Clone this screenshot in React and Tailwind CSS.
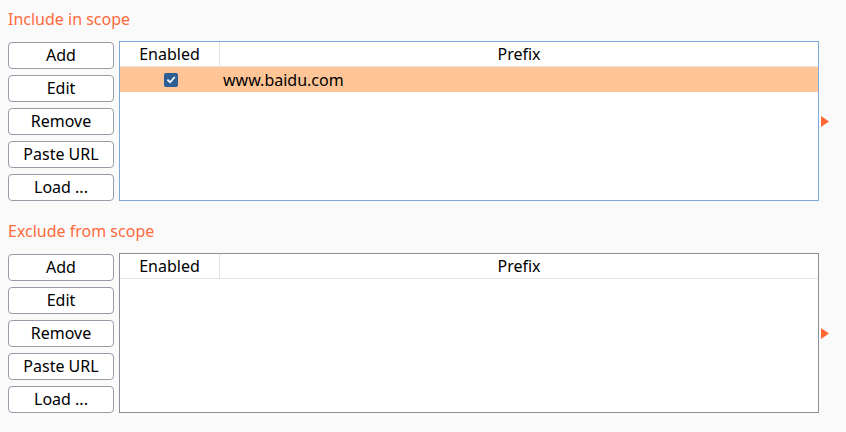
import React from "react";

const font = { fontFamily: '"Noto Sans", "Open Sans", sans-serif' };

function Btn({ children }) {
  return (
    <button className="h-[27px] w-[106px] rounded-[4px] border border-[#9b9aa8] bg-white text-[16px] leading-none text-black flex items-center justify-center">
      {children}
    </button>
  );
}

function Check() {
  return (
    <span className="w-[14px] h-[14px] rounded-[2px] bg-[#2d5e96] flex items-center justify-center">
      <svg width="10" height="10" viewBox="0 0 10 10">
        <path d="M2 5.2 L4.1 7.3 L8.2 2.6" stroke="white" strokeWidth="1.7" fill="none" strokeLinecap="square" />
      </svg>
    </span>
  );
}

function Section({ title, focused, rows, className }) {
  return (
    <div className={className}>
      <div className="h-[41px] flex items-center pb-[3px] text-[16px] text-[#ff6a3d]">{title}</div>
      <div className="flex items-center">
        <div className="flex flex-col gap-[6px]">
          <Btn>Add</Btn>
          <Btn>Edit</Btn>
          <Btn>Remove</Btn>
          <Btn>Paste URL</Btn>
          <Btn>Load ...</Btn>
        </div>
        <div
          className={`ml-[5px] w-[700px] h-[160px] bg-white border ${focused ? "border-[#7fa7d9]" : "border-[#8e8d9a]"}`}
        >
          <div className="flex h-[25px] border-b border-[#e4e4e4] text-[16px] text-black">
            <div className="w-[100px] border-r border-[#e4e4e4] flex items-center justify-center">Enabled</div>
            <div className="flex-1 flex items-center justify-center">Prefix</div>
          </div>
          {rows.map((r) => (
            <div key={r} className="flex h-[25px] bg-[#ffc596] text-[16px] text-black">
              <div className="w-[100px] flex items-center justify-center pl-[2px]">
                <Check />
              </div>
              <div className="flex-1 flex items-center pl-[3px]">{r}</div>
            </div>
          ))}
        </div>
        <svg className="ml-[2px]" width="8" height="11" viewBox="0 0 8 11">
          <polygon points="0,0 8,5.5 0,11" fill="#ff6633" />
        </svg>
      </div>
    </div>
  );
}

export default function App() {
  return (
    <div className="w-[846px] h-[432px] bg-[#fafafa] pl-[8px] overflow-hidden" style={font}>
      <Section title="Include in scope" focused rows={["www.baidu.com"]} />
      <Section className="mt-[11px]" title="Exclude from scope" rows={[]} />
    </div>
  );
}
